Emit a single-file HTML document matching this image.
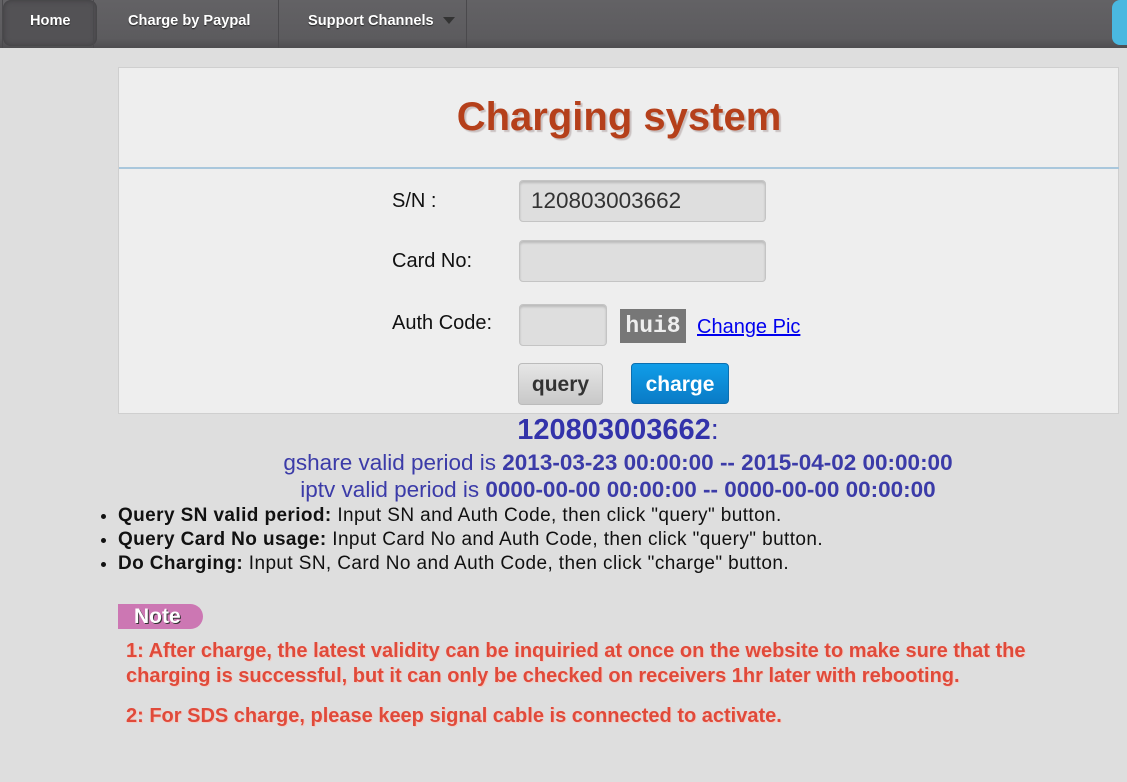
<!DOCTYPE html>
<html><head><style>
*{margin:0;padding:0;box-sizing:border-box}
body{width:1127px;height:782px;background:#dedede;font-family:"Liberation Sans",Arial,sans-serif;position:relative;overflow:hidden}
.a{position:absolute;white-space:nowrap}
.nav{position:absolute;left:0;top:0;width:1127px;height:48px;background:linear-gradient(#636265,#5c5b5e 80%,#4e4d50)}
.sep{position:absolute;top:0;width:1px;height:48px;background:#4a494c}
.nl{position:absolute;top:13px;color:#fff;font-weight:bold;font-size:14.6px;text-shadow:0 1px 1px #222}
.panel{position:absolute;left:118px;top:67px;width:1001px;height:347px;background:#eeeeee;border:1px solid #cfcfcf}
.inp{position:absolute;background:#dedede;border:1px solid #c4c4c4;border-radius:4px;box-shadow:inset 0 2px 2px #bbb}
.lbl{position:absolute;font-size:20px;color:#111}
.red{position:absolute;left:126px;color:#e04a3a;font-weight:bold;font-size:20px;white-space:nowrap;text-shadow:1px 1px 0 #f5c8c0}
li{font-size:19px;letter-spacing:0.4px;color:#111;line-height:24px}
</style></head><body>
<div class="nav">
 <div style="position:absolute;left:3px;top:0;width:94px;height:46px;background:#535255;border-radius:8px;box-shadow:inset 0 0 6px #3c3b3e"></div>
 <div class="sep" style="left:2px"></div>
 <div class="sep" style="left:93px"></div>
 <div class="sep" style="left:278px"></div>
 <div class="sep" style="left:466px"></div>
 <div class="nl" style="left:30px">Home</div>
 <div class="nl" style="left:128px">Charge by Paypal</div>
 <div class="nl" style="left:308px">Support Channels</div>
 <div style="position:absolute;left:443px;top:17px;border-left:6px solid transparent;border-right:6px solid transparent;border-top:7px solid #333"></div>
 <div style="position:absolute;left:1112px;top:0;width:20px;height:45px;background:#4ab8e0;border-radius:8px 0 0 8px"></div>
</div>
<div class="panel">
 <div class="a" style="left:0;width:1000px;top:27px;text-align:center;font-size:40px;font-weight:bold;color:#b5401b;text-shadow:2px 2px 1px #c9c0c0">Charging system</div>
 <div style="position:absolute;left:0;top:99px;width:1000px;height:2px;background:#a9c7dc"></div>
</div>
<div class="lbl" style="left:392px;top:190px">S/N :</div>
<div class="inp" style="left:519px;top:180px;width:247px;height:42px"></div>
<div class="a" style="left:531px;top:188px;font-size:22.5px;color:#333">120803003662</div>
<div class="lbl" style="left:392px;top:250px">Card No:</div>
<div class="inp" style="left:519px;top:240px;width:247px;height:42px"></div>
<div class="lbl" style="left:392px;top:312px">Auth Code:</div>
<div class="inp" style="left:519px;top:304px;width:88px;height:42px"></div>
<div class="a" style="left:620px;top:309px;width:66px;height:34px;background:#777;color:#eee;font-family:'Liberation Mono',monospace;font-weight:bold;font-size:23px;line-height:34px;text-align:center">hui8</div>
<div class="a" style="left:697px;top:316px;font-size:20px;color:#0000ee;text-decoration:underline">Change Pic</div>
<div class="a" style="left:518px;top:363px;width:85px;height:42px;border:1px solid #bbb;border-radius:4px;background:linear-gradient(#e6e6e6,#c8c8c8);font-size:21px;font-weight:bold;color:#333;text-align:center;line-height:42px">query</div>
<div class="a" style="left:631px;top:363px;width:98px;height:41px;border:1px solid #0b6fb0;border-radius:4px;background:linear-gradient(#109de8,#0a7bc6);font-size:21px;font-weight:bold;color:#fff;text-align:center;line-height:41px">charge</div>
<div class="a" style="left:118px;width:1000px;top:414px;text-align:center;font-size:29px;color:#3333aa"><b>120803003662</b>:</div>
<div class="a" style="left:118px;width:1000px;top:450px;text-align:center;font-size:22.5px;color:#3b3ba8">gshare valid period is <b>2013-03-23 00:00:00 -- 2015-04-02 00:00:00</b></div>
<div class="a" style="left:118px;width:1000px;top:477px;text-align:center;font-size:22.5px;color:#3b3ba8">iptv valid period is <b>0000-00-00 00:00:00 -- 0000-00-00 00:00:00</b></div>
<ul class="a" style="left:118px;top:504px;list-style:disc">
<li><b>Query SN valid period:</b> Input SN and Auth Code, then click "query" button.</li>
<li><b>Query Card No usage:</b> Input Card No and Auth Code, then click "query" button.</li>
<li><b>Do Charging:</b> Input SN, Card No and Auth Code, then click "charge" button.</li>
</ul>
<div class="a" style="left:118px;top:604px;width:85px;height:25px;background:#cc77b3;border-radius:0 13px 13px 0;color:#fff;font-weight:bold;font-size:21px;line-height:25px;padding-left:16px;text-shadow:1px 1px 0 #333">Note</div>
<div class="red" style="top:640px">1: After charge, the latest validity can be inquiried at once on the website to make sure that the</div>
<div class="red" style="top:665px">charging is successful, but it can only be checked on receivers 1hr later with rebooting.</div>
<div class="red" style="top:705px">2: For SDS charge, please keep signal cable is connected to activate.</div>
</body></html>
